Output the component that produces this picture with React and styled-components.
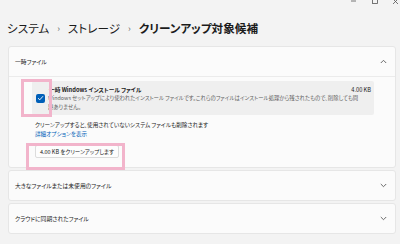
import React from 'react';
import styled, { createGlobalStyle } from 'styled-components';

const Global = createGlobalStyle`
  html, body { margin: 0; padding: 0; background: #f3f3f3; }
  body {
    font-family: "Noto Sans CJK JP", "Noto Sans", sans-serif;
    font-feature-settings: "palt";
    color: #1b1b1b;
    width: 400px;
    height: 244px;
    overflow: hidden;
  }
`;

const Root = styled.div`
  position: relative;
  width: 400px;
  height: 244px;
`;

const Controls = styled.div`
  height: 8px;
  display: flex;
  justify-content: flex-end;
  align-items: flex-start;
`;

const Breadcrumb = styled.div`
  height: 36px;
  padding: 2px 0 0 7px;
  display: flex;
  align-items: center;
  gap: 6px;
  font-size: 11.6px;
  color: #1b1b1b;
`;

const Crumb = styled.span`
  font-weight: ${p => (p.$current ? 700 : 400)};
`;

const Sep = styled.span`
  font-size: 9px;
  color: #6a6a6a;
  margin: 0 2px;
`;

const Stack = styled.div`
  display: flex;
  flex-direction: column;
  gap: 2px;
  padding: 0 4px 0 8px;
`;

const Panel = styled.div`
  background: #fbfbfb;
  border: 1px solid #e6e6e6;
  border-radius: 3px;
`;

const Header = styled.div`
  height: 29px;
  padding: 0 8px 0 6px;
  display: flex;
  align-items: center;
  justify-content: space-between;
  font-size: 5.8px;
  border-bottom: ${p => (p.$open ? '1px solid #ebebeb' : 'none')};
`;

const Body = styled.div`
  padding: 4px 21px 9px 23px;
  display: flex;
  flex-direction: column;
`;

const Item = styled.div`
  background: #efefef;
  border-radius: 2px;
  height: 34px;
  box-sizing: border-box;
  padding: 3px 3px 3px 4px;
  display: flex;
  align-items: center;
  gap: 3px;
`;

const Check = styled.div`
  width: 9px;
  height: 9px;
  border-radius: 2px;
  background: #005fb8;
  flex: none;
  display: flex;
  align-items: center;
  justify-content: center;
`;

const ItemText = styled.div`
  flex: 1;
  min-width: 0;
  display: flex;
  flex-direction: column;
`;

const TitleRow = styled.div`
  display: flex;
  justify-content: space-between;
  font-size: 5.7px;
  line-height: 9px;
  font-weight: 700;
  padding-left: 1px;
`;

const Size = styled.span`
  font-weight: 400;
  font-size: 5.7px;
`;

const Desc = styled.div`
  font-size: 5.4px;
  line-height: 9px;
  color: #5f5f5f;
  white-space: nowrap;
  overflow: hidden;
`;

const Note = styled.div`
  margin: 6px 0 0 3px;
  font-size: 5.6px;
  line-height: 9px;
  color: #1b1b1b;
`;

const Link = styled.div`
  color: #005fb8;
`;

const Button = styled.div`
  margin: 6px 0 0 3px;
  width: 84px;
  height: 13px;
  box-sizing: border-box;
  background: #fdfdfd;
  border: 1px solid #dcdcdc;
  border-radius: 2px;
  display: flex;
  align-items: center;
  justify-content: center;
  font-size: 5.5px;
  white-space: nowrap;
`;

const Mark = styled.div`
  position: absolute;
  left: ${p => p.$x}px;
  top: ${p => p.$y}px;
  width: ${p => p.$w}px;
  height: ${p => p.$h}px;
  box-sizing: border-box;
  border: 3px solid #f2b4cb;
  pointer-events: none;
`;

const Chevron = ({ up }) => (
  <svg width="7" height="5" viewBox="0 0 7 5">
    <polyline
      points={up ? '0.8,4 3.5,1.3 6.2,4' : '0.8,1 3.5,3.7 6.2,1'}
      fill="none"
      stroke="#5a5a5a"
      strokeWidth="0.9"
    />
  </svg>
);

const WindowButtons = () => (
  <svg width="52" height="6" viewBox="0 0 52 6">
    <line x1="3" y1="1" x2="8" y2="1" stroke="#555" strokeWidth="0.8" />
    <rect x="24.5" y="-3" width="5" height="6.5" fill="none" stroke="#555" strokeWidth="0.8" />
    <line x1="45" y1="-1" x2="50" y2="4" stroke="#555" strokeWidth="0.8" />
    <line x1="50" y1="-1" x2="45" y2="4" stroke="#555" strokeWidth="0.8" />
  </svg>
);

export default function App() {
  return (
    <Root>
      <Global />
      <Controls>
        <WindowButtons />
      </Controls>
      <Breadcrumb>
        <Crumb>システム</Crumb>
        <Sep>›</Sep>
        <Crumb>ストレージ</Crumb>
        <Sep>›</Sep>
        <Crumb $current>クリーンアップ対象候補</Crumb>
      </Breadcrumb>
      <Stack>
        <Panel>
          <Header $open>
            <span>一時ファイル</span>
            <Chevron up />
          </Header>
          <Body>
            <Item>
              <Check>
                <svg width="7" height="6" viewBox="0 0 7 6">
                  <polyline points="1,3.2 2.8,4.8 6,1.2" fill="none" stroke="#fff" strokeWidth="0.9" />
                </svg>
              </Check>
              <ItemText>
                <TitleRow>
                  <span>一時 Windows インストール ファイル</span>
                  <Size>4.00 KB</Size>
                </TitleRow>
                <Desc>
                  Windows セットアップにより使われたインストール ファイルです。これらのファイルはインストール処理から残されたもので、削除しても問
                </Desc>
                <Desc>題ありません。</Desc>
              </ItemText>
            </Item>
            <Note>
              クリーンアップすると、使用されていないシステム ファイルも削除されます
              <Link>詳細オプションを表示</Link>
            </Note>
            <Button>4.00 KB をクリーンアップします</Button>
          </Body>
        </Panel>
        <Panel>
          <Header>
            <span>大きなファイルまたは未使用のファイル</span>
            <Chevron />
          </Header>
        </Panel>
        <Panel>
          <Header>
            <span>クラウドに同期されたファイル</span>
            <Chevron />
          </Header>
        </Panel>
      </Stack>
      <Mark $x={21} $y={79} $w={31} $h={38} />
      <Mark $x={26} $y={143} $w={99} $h={27} />
    </Root>
  );
}
